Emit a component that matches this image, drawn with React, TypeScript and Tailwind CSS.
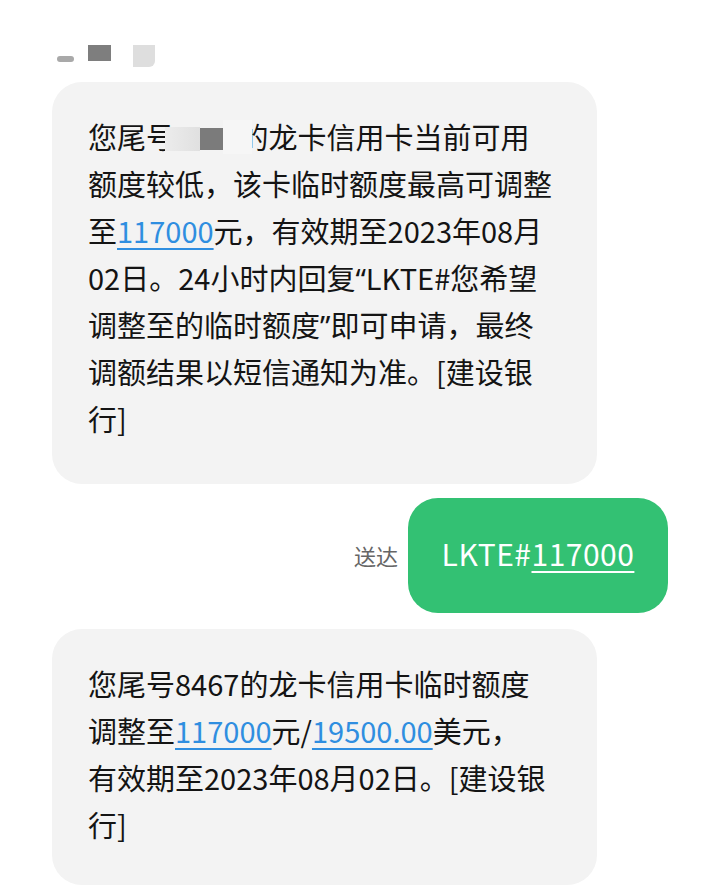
import React from "react"

const font = { fontFamily: '"Noto Sans CJK SC", "Noto Sans", sans-serif' }

function Link({ children }: { children: React.ReactNode }) {
  return <span className="text-[#2f8ee0] underline decoration-[1.5px] underline-offset-[5px]">{children}</span>
}

function Quote({ children }: { children: React.ReactNode }) {
  return <span style={{ fontFamily: '"Noto Sans", sans-serif' }}>{children}</span>
}

function Bubble({ lines, bottom }: { lines: React.ReactNode[]; bottom: string }) {
  return (
    <div className={`ml-[52px] w-[545px] rounded-[30px] bg-[#f3f3f3] pl-[36px] pr-[30px] pt-[31px] ${bottom}`}>
      {lines.map((line, i) => (
        <div key={i} className="relative h-[47px] whitespace-nowrap text-[29px] leading-[47px] text-[#141414]">
          {line}
        </div>
      ))}
    </div>
  )
}

export default function App() {
  const first = [
    <>
      您尾号8467的龙卡信用卡当前可用
      {/* masked card number */}
      <span className="absolute left-[77px] top-[7px] flex h-[34px] items-end">
        <span className="mb-[3px] h-[24px] w-[35px] bg-gradient-to-r from-[#ececec] to-[#e0e0e0]" />
        <span className="mb-[4px] h-[22px] w-[23px] bg-[#7b7b7b]" />
        <span className="h-[34px] w-[29px] bg-[#f6f6f6]" />
      </span>
    </>,
    <>额度较低，该卡临时额度最高可调整</>,
    <>
      至<Link>117000</Link>元，有效期至2023年08月
    </>,
    <>
      02日。24小时内回复<Quote>“</Quote>LKTE#您希望
    </>,
    <>
      调整至的临时额度<Quote>”</Quote>即可申请，最终
    </>,
    <>调额结果以短信通知为准。[建设银</>,
    <>行]</>,
  ]

  const last = [
    <>您尾号8467的龙卡信用卡临时额度</>,
    <>
      调整至<Link>117000</Link>元/<Link>19500.00</Link>美元，
    </>,
    <>有效期至2023年08月02日。[建设银</>,
    <>行]</>,
  ]

  return (
    <div className="h-[895px] w-[720px] overflow-hidden bg-white" style={font}>
      {/* masked sender name */}
      <div className="flex h-[82px] items-start pl-[57px] pt-[45px]">
        <span className="mt-[11px] h-[6px] w-[17px] rounded-sm bg-[#a9a9a9]" />
        <span className="ml-[14px] h-[16px] w-[23px] bg-[#7e7e7e]" />
        <span className="ml-[22px] h-[22px] w-[22px] rounded-br-md bg-[#dedede]" />
      </div>

      <Bubble lines={first} bottom="pb-[42px]" />

      <div className="mt-[14px] flex items-center justify-end pr-[52px]">
        <span className="mr-[10px] text-[22px] text-[#666666]">送达</span>
        <div className="flex h-[115px] w-[260px] items-center justify-center rounded-[30px] bg-[#33c173] pb-[4px] text-[30px] tracking-[0.5px] text-white">
          LKTE#<span className="underline decoration-[1.5px] underline-offset-[5px]">117000</span>
        </div>
      </div>

      <div className="mt-[16px]">
        <Bubble lines={last} bottom="pb-[37px]" />
      </div>
    </div>
  )
}
